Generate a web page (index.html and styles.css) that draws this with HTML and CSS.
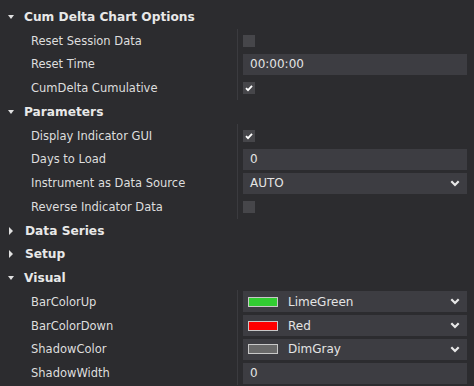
FILE: index.html
```html
<!DOCTYPE html>
<html>
<head>
<meta charset="utf-8">
<link rel="stylesheet" href="styles.css">
</head>
<body>
<div class="grid">
  <div class="row hdr"><span class="tri down"></span><span class="htext">Cum Delta Chart Options</span></div>
  <div class="row"><div class="lbl">Reset Session Data</div><div class="val"><span class="cb"></span></div></div>
  <div class="row"><div class="lbl">Reset Time</div><div class="val"><div class="inp">00:00:00</div></div></div>
  <div class="row"><div class="lbl">CumDelta Cumulative</div><div class="val"><span class="cb on"><svg viewBox="0 0 12 12" width="12" height="12"><polyline points="3,6.2 5,8.2 9,3.8" fill="none" stroke="#fff" stroke-width="1.8"/></svg></span></div></div>

  <div class="row hdr"><span class="tri down"></span><span class="htext">Parameters</span></div>
  <div class="row"><div class="lbl">Display Indicator GUI</div><div class="val"><span class="cb on"><svg viewBox="0 0 12 12" width="12" height="12"><polyline points="3,6.2 5,8.2 9,3.8" fill="none" stroke="#fff" stroke-width="1.8"/></svg></span></div></div>
  <div class="row"><div class="lbl">Days to Load</div><div class="val"><div class="inp">0</div></div></div>
  <div class="row"><div class="lbl">Instrument as Data Source</div><div class="val"><div class="inp sel"><span>AUTO</span><svg class="chev" viewBox="0 0 10 7" width="10" height="7"><polyline points="1.3,1.3 5,5 8.7,1.3" fill="none" stroke="#e8e8e8" stroke-width="2.2"/></svg></div></div></div>
  <div class="row"><div class="lbl">Reverse Indicator Data</div><div class="val"><span class="cb"></span></div></div>

  <div class="row hdr"><span class="tri right"></span><span class="htext">Data Series</span></div>
  <div class="row hdr"><span class="tri right"></span><span class="htext">Setup</span></div>
  <div class="row hdr"><span class="tri down"></span><span class="htext">Visual</span></div>

  <div class="row"><div class="lbl">BarColorUp</div><div class="val"><div class="inp sel"><span class="sw" style="background:#32cd32"></span><span>LimeGreen</span><svg class="chev" viewBox="0 0 10 7" width="10" height="7"><polyline points="1.3,1.3 5,5 8.7,1.3" fill="none" stroke="#e8e8e8" stroke-width="2.2"/></svg></div></div></div>
  <div class="row"><div class="lbl">BarColorDown</div><div class="val"><div class="inp sel"><span class="sw" style="background:#ff0000"></span><span>Red</span><svg class="chev" viewBox="0 0 10 7" width="10" height="7"><polyline points="1.3,1.3 5,5 8.7,1.3" fill="none" stroke="#e8e8e8" stroke-width="2.2"/></svg></div></div></div>
  <div class="row"><div class="lbl">ShadowColor</div><div class="val"><div class="inp sel"><span class="sw" style="background:#696969"></span><span>DimGray</span><svg class="chev" viewBox="0 0 10 7" width="10" height="7"><polyline points="1.3,1.3 5,5 8.7,1.3" fill="none" stroke="#e8e8e8" stroke-width="2.2"/></svg></div></div></div>
  <div class="row"><div class="lbl">ShadowWidth</div><div class="val"><div class="inp">0</div></div></div>
</div>
</body>
</html>
```
FILE: styles.css
```css
html, body {
  margin: 0;
  padding: 0;
  background: #2c2c2f;
  overflow: hidden;
}
body {
  width: 474px;
  height: 386px;
  font-family: "DejaVu Sans", "Liberation Sans", sans-serif;
  font-size: 11.5px;
  color: #dedede;
}
.grid {
  padding-top: 5px;
  display: flex;
  flex-direction: column;
}
.row {
  height: 23.75px;
  display: flex;
  align-items: stretch;
}
.hdr {
  align-items: center;
}
.tri {
  width: 0;
  height: 0;
  margin-left: 8px;
  margin-right: 10px;
}
.tri.down {
  border-left: 3.5px solid transparent;
  border-right: 3.5px solid transparent;
  border-top: 4.5px solid #e0e0e0;
}
.tri.right {
  margin-left: 9px;
  margin-right: 12px;
  border-top: 4px solid transparent;
  border-bottom: 4px solid transparent;
  border-left: 4.5px solid #e0e0e0;
}
.htext {
  font-weight: 700;
  color: #e8e8e8;
  font-size: 12.2px;
}
.lbl {
  width: 206px;
  padding-left: 31px;
  border-right: 1px solid #3b3b3f;
  display: flex;
  align-items: center;
  white-space: nowrap;
}
.val {
  flex: 1;
  padding-left: 5px;
  padding-right: 7px;
  display: flex;
  align-items: center;
}
.cb {
  width: 12px;
  height: 12px;
  background: #46464a;
  display: block;
}
.cb svg { display: block; }
.inp {
  flex: 1;
  height: 21px;
  background: #3d3d42;
  display: flex;
  align-items: center;
  padding-left: 7px;
  box-sizing: border-box;
  color: #e4e4e4;
  font-size: 12px;
}
.sel { padding-right: 7px; }
.chev { margin-left: auto; display: block; }
.sw {
  width: 28px;
  height: 8px;
  border: 1px solid #c8c8c8;
  margin-left: -2px;
  margin-right: 10px;
}
```
